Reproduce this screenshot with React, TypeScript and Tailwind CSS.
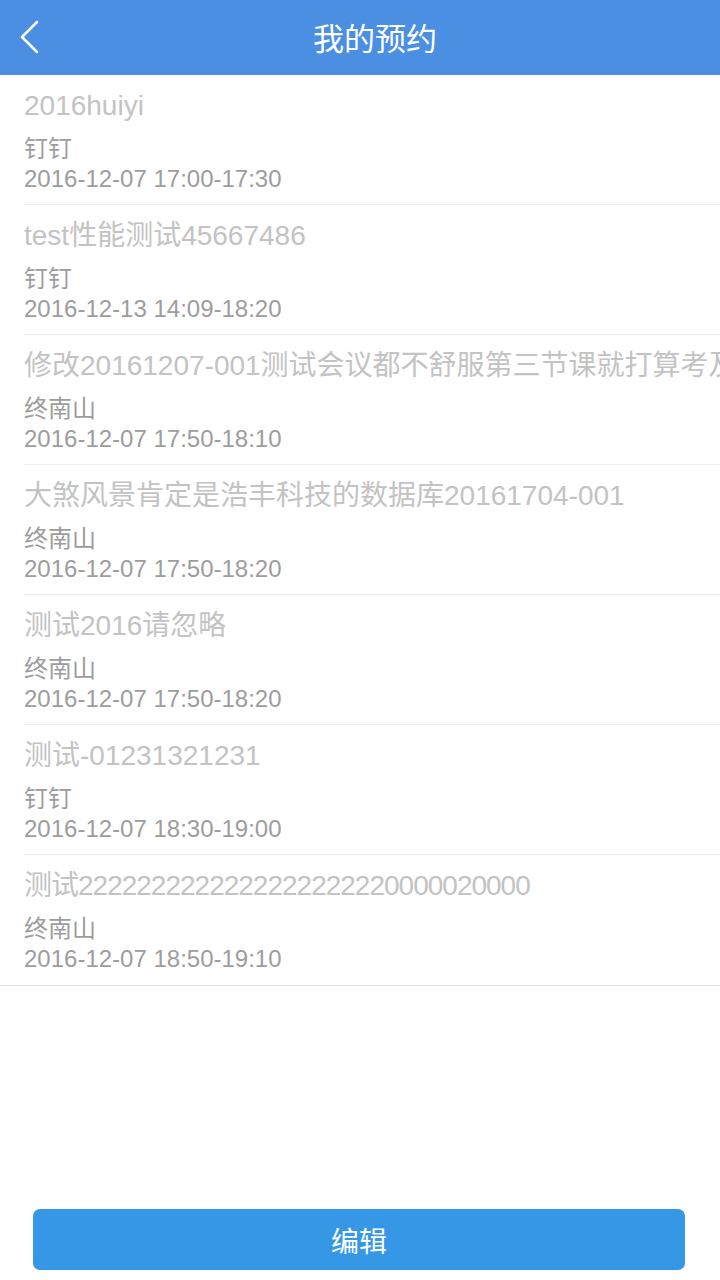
const items = [
  { title: '2016huiyi', place: '钉钉', time: '2016-12-07 17:00-17:30' },
  { title: 'test性能测试45667486', place: '钉钉', time: '2016-12-13 14:09-18:20' },
  { title: '修改20161207-001测试会议都不舒服第三节课就打算考及', place: '终南山', time: '2016-12-07 17:50-18:10' },
  { title: '大煞风景肯定是浩丰科技的数据库20161704-001', place: '终南山', time: '2016-12-07 17:50-18:20' },
  { title: '测试2016请忽略', place: '终南山', time: '2016-12-07 17:50-18:20' },
  { title: '测试-01231321231', place: '钉钉', time: '2016-12-07 18:30-19:00' },
  { title: '测试2222222222222222222220000020000', place: '终南山', time: '2016-12-07 18:50-19:10', tight: true },
];

const font = { fontFamily: '"Liberation Sans", "Noto Sans CJK SC", sans-serif' };

export default function App() {
  return (
    <div className="h-[1280px] w-[720px] bg-white flex flex-col" style={font}>
      {/* header */}
      <div className="h-[75px] bg-[#4a8fe1] flex items-center relative shrink-0">
        <svg className="absolute left-[18px] top-[20px]" width="22" height="34" viewBox="0 0 22 34" fill="none">
          <polyline points="19,2 4,17 19,32" stroke="white" strokeWidth="2.5" strokeLinecap="round" strokeLinejoin="round" />
        </svg>
        <div className="flex-1 text-center text-white text-[31px] pl-[30px]" style={{ fontFamily: '"Noto Sans CJK SC", sans-serif' }}>
          我的预约
        </div>
      </div>

      {/* list */}
      <div className="border-b border-[#e3e3e3]">
        {items.map((it, i) => (
          <div key={i} className="pl-6">
            <div className={`h-[130px] pt-[13px] ${i < items.length - 1 ? 'border-b border-[#ececec]' : ''}`}>
              <div className={`text-[28px] leading-[36px] text-[#c3c3c3] whitespace-nowrap overflow-hidden ${it.tight ? 'tracking-[-1px]' : ''}`}>
                {it.title}
              </div>
              <div className="mt-[10px] text-[24px] leading-[30px] text-[#9d9d9d]">{it.place}</div>
              <div className="text-[24px] leading-[30px] text-[#9d9d9d]">{it.time}</div>
            </div>
          </div>
        ))}
      </div>

      <div className="flex-1" />

      <div className="pl-[33px] pr-[35px] pb-[10px]">
        <button className="w-full h-[61px] rounded-[7px] bg-[#3597e6] text-white text-[28px]" style={{ fontFamily: '"Noto Sans CJK SC", sans-serif' }}>
          编辑
        </button>
      </div>
    </div>
  );
}
